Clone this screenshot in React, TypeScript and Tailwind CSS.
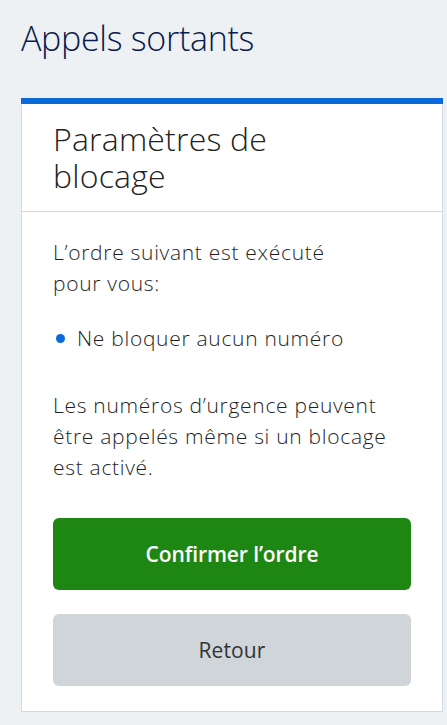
export default function App() {
  return (
    <div className="min-h-screen w-full bg-[#edf1f4] pl-[21px] pr-[4px] pt-[17px] pb-[14px] font-['Open_Sans',sans-serif]">
      {/* page title */}
      <h1 className="text-[34px] leading-[42px] font-light text-[#0b1a4c] tracking-[-0.3px]">
        Appels sortants
      </h1>

      {/* card */}
      <div className="mt-[39px] bg-white border border-[#d5dade] border-t-0">
        <div className="h-[6px] bg-[#0a69d9] -mx-px"></div>

        <div className="px-[31px] pt-[16px] pb-[17px] border-b border-[#d5dade]">
          <h2 className="text-[32px] leading-[37px] font-light text-[#222] max-w-[270px] tracking-[0.2px]">
            Paramètres de blocage
          </h2>
        </div>

        <div className="px-[31px] pt-[25px] pb-[25px] text-[21px] leading-[31px] text-[#1f1f1f] font-light tracking-[0.7px]">
          <p className="max-w-[290px]">L’ordre suivant est exécuté pour vous:</p>

          <ul className="mt-[24px]">
            <li className="flex items-center gap-[12px]">
              <span className="ml-[3px] w-[9px] h-[9px] rounded-full bg-[#0a69d9]"></span>
              <span>Ne bloquer aucun numéro</span>
            </li>
          </ul>

          <p className="mt-[36px]">
            Les numéros d’urgence peuvent être appelés même si un blocage est activé.
          </p>

          <div className="mt-[35px] flex flex-col gap-[24px] tracking-normal">
            <button className="h-[72px] w-full rounded-[6px] bg-[#1e8714] text-white text-[21px] font-semibold tracking-[-0.1px]">
              Confirmer l’ordre
            </button>
            <button className="h-[72px] w-full rounded-[6px] bg-[#d0d5d9] text-[#333] text-[21px] font-medium tracking-[0.1px]">
              Retour
            </button>
          </div>
        </div>
      </div>
    </div>
  );
}
